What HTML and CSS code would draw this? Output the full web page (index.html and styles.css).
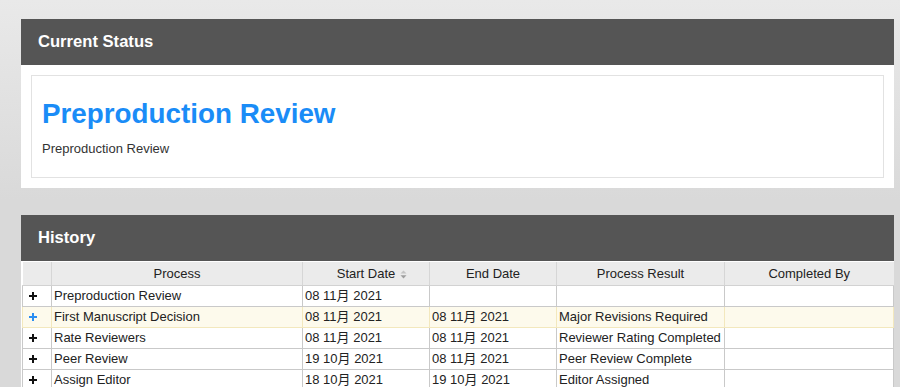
FILE: index.html
```html
<!DOCTYPE html>
<html lang="en">
<head>
<meta charset="utf-8">
<title>Status</title>
<link rel="stylesheet" href="styles.css">
</head>
<body>
<div class="page">
  <section class="panel panel-status">
    <header class="panel-head">Current Status</header>
    <div class="panel-body">
      <div class="status-box">
        <h1 class="status-title">Preproduction Review</h1>
        <p class="status-desc">Preproduction Review</p>
      </div>
    </div>
  </section>

  <section class="panel panel-history">
    <header class="panel-head">History</header>
    <div class="grid">
      <table class="grid-table">
        <colgroup>
          <col class="c-exp">
          <col class="c-proc">
          <col class="c-date">
          <col class="c-date">
          <col class="c-res">
          <col class="c-by">
        </colgroup>
        <thead>
          <tr>
            <th></th>
            <th>Process</th>
            <th><span class="sortable">Start Date<span class="sort-ico"><svg width="7" height="9" viewBox="0 0 7 9"><path d="M3.5 0.5L6.5 3.5H0.5Z" fill="#c4c4c4"/><path d="M3.5 8.5L6.5 5.2H0.5Z" fill="#9e9e9e"/></svg></span></span></th>
            <th>End Date</th>
            <th>Process Result</th>
            <th>Completed By</th>
          </tr>
        </thead>
        <tbody>
          <tr>
            <td class="exp"><svg class="plus" width="8" height="8" viewBox="0 0 8 8"><path d="M3 0h2v3h3v2h-3v3h-2v-3h-3v-2h3z"/></svg></td>
            <td>Preproduction Review</td>
            <td>08 11月 2021</td>
            <td></td>
            <td></td>
            <td></td>
          </tr>
          <tr class="hover">
            <td class="exp"><svg class="plus" width="8" height="8" viewBox="0 0 8 8"><path d="M3 0h2v3h3v2h-3v3h-2v-3h-3v-2h3z"/></svg></td>
            <td>First Manuscript Decision</td>
            <td>08 11月 2021</td>
            <td>08 11月 2021</td>
            <td>Major Revisions Required</td>
            <td></td>
          </tr>
          <tr>
            <td class="exp"><svg class="plus" width="8" height="8" viewBox="0 0 8 8"><path d="M3 0h2v3h3v2h-3v3h-2v-3h-3v-2h3z"/></svg></td>
            <td>Rate Reviewers</td>
            <td>08 11月 2021</td>
            <td>08 11月 2021</td>
            <td>Reviewer Rating Completed</td>
            <td></td>
          </tr>
          <tr>
            <td class="exp"><svg class="plus" width="8" height="8" viewBox="0 0 8 8"><path d="M3 0h2v3h3v2h-3v3h-2v-3h-3v-2h3z"/></svg></td>
            <td>Peer Review</td>
            <td>19 10月 2021</td>
            <td>08 11月 2021</td>
            <td>Peer Review Complete</td>
            <td></td>
          </tr>
          <tr>
            <td class="exp"><svg class="plus" width="8" height="8" viewBox="0 0 8 8"><path d="M3 0h2v3h3v2h-3v3h-2v-3h-3v-2h3z"/></svg></td>
            <td>Assign Editor</td>
            <td>18 10月 2021</td>
            <td>19 10月 2021</td>
            <td>Editor Assigned</td>
            <td></td>
          </tr>
        </tbody>
      </table>
    </div>
  </section>
</div>
</body>
</html>
```

FILE: styles.css
```css
html, body {
  margin: 0;
  padding: 0;
  height: 100%;
  overflow: hidden;
}
body {
  background: linear-gradient(to bottom, #e9e9e9 0px, #d9d9d9 200px, #d9d9d9 100%);
  font-family: "Liberation Sans", Arial, "Noto Sans CJK SC", sans-serif;
  font-size: 13px;
  color: #333;
}
.page {
  padding: 19px 6px 0 21px;
}
.panel {
  background: #fff;
  width: 873px;
}
.panel-status {
  margin-bottom: 27px;
}
.panel-head {
  height: 46px;
  background: #555555;
  color: #fff;
  font-weight: bold;
  font-size: 16.6px;
  line-height: 46px;
  padding-left: 17px;
  box-sizing: border-box;
}
.panel-body {
  padding: 10px;
}
.status-box {
  border: 1px solid #e2e2e2;
  padding: 10px;
}
.status-title {
  margin: 12px 0 10px;
  font-size: 27.8px;
  line-height: 32px;
  font-weight: bold;
  color: #1a8cf7;
}
.status-desc {
  margin: 0 0 9px;
  line-height: 18px;
  font-size: 13px;
  color: #333;
}
.grid {
  padding: 1px 1px 0 1px;
  background: #fff;
}
.grid-table {
  border-collapse: collapse;
  table-layout: fixed;
  width: 871px;
  font-size: 13px;
  color: #222;
}
.c-exp { width: 29px; }
.c-proc { width: 251px; }
.c-date { width: 127px; }
.c-res { width: 168px; }
.c-by { width: 169px; }
.grid-table th {
  height: 23px;
  padding: 0 2px;
  background: #ebebeb;
  font-weight: normal;
  text-align: center;
  border-left: 1px solid #d6d6d6;
  border-bottom: 1px solid #d2d2d2;
  color: #222;
  white-space: nowrap;
}
.grid-table th:first-child {
  border-left: none;
}
.sortable {
  position: relative;
}
.sort-ico {
  position: absolute;
  left: 100%;
  top: 50%;
  margin-left: 5px;
  margin-top: -4px;
  line-height: 0;
}
.grid-table td {
  height: 20px;
  padding: 0 2px;
  border: 1px solid #c9c9c9;
  border-top: none;
  white-space: nowrap;
  overflow: hidden;
  line-height: 20px;
  background: #fff;
}
.grid-table td.exp {
  padding: 0 0 0 6px;
  line-height: 0;
  vertical-align: middle;
}
.plus {
  display: block;
  fill: #111;
  shape-rendering: crispEdges;
}
.grid-table tr.hover td {
  background: #fdfaec;
  border-color: #f3e8bd;
}
.grid-table tr.hover .plus {
  fill: #2b8ef2;
}
```
